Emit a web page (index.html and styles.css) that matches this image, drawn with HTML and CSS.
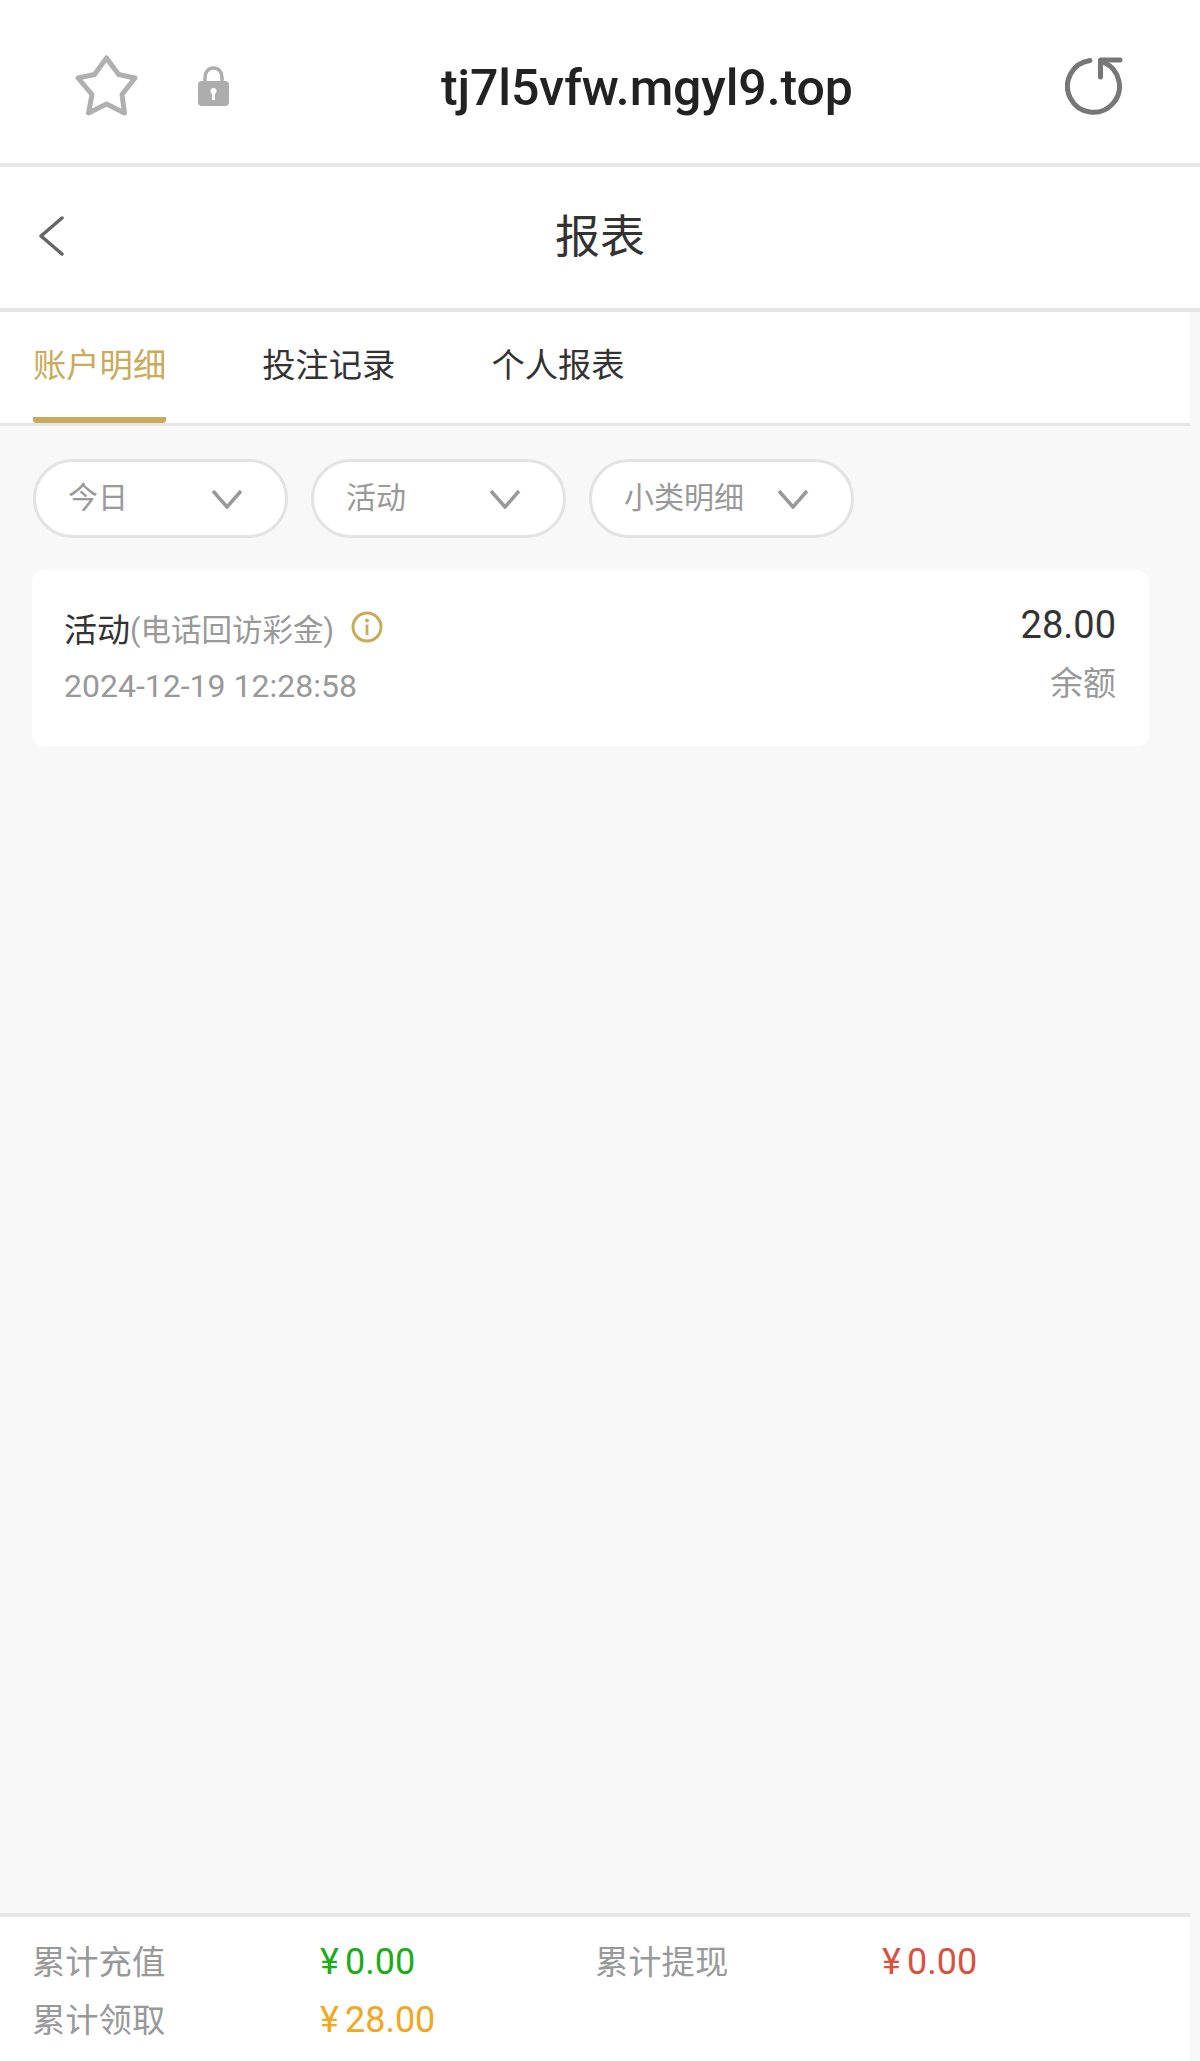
FILE: index.html
```html
<!DOCTYPE html>
<html lang="zh-CN">
<head>
<meta charset="utf-8">
<title>报表</title>
<link rel="stylesheet" href="styles.css">
</head>
<body>
<header class="addressbar">
  <svg class="star" viewBox="0 0 63 61" width="63" height="61"><path d="M31.5 3L43.6 19.5L60 23L47 39.5L49.5 58L31.5 49L13.5 58L17 39.5L3 23L19.5 19.5Z" fill="none" stroke="#b0b0b0" stroke-width="5" stroke-linejoin="round"/></svg>
  <svg class="lock" viewBox="0 0 31 40" width="31" height="40"><path d="M7 16V11.5C7 6 10.5 2 15.5 2S24 6 24 11.5V16" fill="none" stroke="#adadad" stroke-width="3.5"/><rect x="0" y="15" width="31" height="25" rx="4" fill="#adadad"/><circle cx="15.5" cy="25" r="3" fill="#fff"/><rect x="14" y="25" width="3" height="9" rx="1" fill="#fff"/></svg>
  <div class="url">tj7l5vfw.mgyl9.top</div>
  <svg class="reload" viewBox="0 0 60 58" width="60" height="58"><path d="M25 3.5A26 26 0 1 0 39 5.5" fill="none" stroke="#777" stroke-width="5" stroke-linecap="round"/><path d="M35.5 20V3H55" fill="none" stroke="#777" stroke-width="5" stroke-linecap="round" stroke-linejoin="round"/></svg>
</header>
<header class="titlebar">
  <svg class="back" viewBox="0 0 26 40" width="26" height="40"><path d="M24 2L3 20L24 38" fill="none" stroke="#666" stroke-width="3.5" stroke-linecap="round" stroke-linejoin="round"/></svg>
  <h1 class="title">报表</h1>
  <span></span>
</header>
<div class="app">
  <nav class="tabs">
    <a class="tab tab-active">账户明细</a>
    <a class="tab">投注记录</a>
    <a class="tab">个人报表</a>
  </nav>
  <main class="main">
    <div class="filters">
      <div class="pill"><span class="pill-text">今日</span><svg class="chev" viewBox="0 0 32 20" width="32" height="20"><path d="M2 2L16 18L30 2" fill="none" stroke="#999" stroke-width="3.5"/></svg></div>
      <div class="pill"><span class="pill-text">活动</span><svg class="chev" viewBox="0 0 32 20" width="32" height="20"><path d="M2 2L16 18L30 2" fill="none" stroke="#999" stroke-width="3.5"/></svg></div>
      <div class="pill"><span class="pill-text">小类明细</span><svg class="chev" viewBox="0 0 32 20" width="32" height="20"><path d="M2 2L16 18L30 2" fill="none" stroke="#999" stroke-width="3.5"/></svg></div>
    </div>
    <article class="card">
      <div class="card-left">
        <div class="card-title">活动<span class="card-sub">(电话回访彩金)</span>
          <svg class="info" viewBox="0 0 32 32" width="32" height="32"><circle cx="16" cy="16" r="14" fill="none" stroke="#c9ab5b" stroke-width="3"/><circle cx="16" cy="9.5" r="1.9" fill="#c9ab5b"/><rect x="14.6" y="13.5" width="2.8" height="10.5" fill="#c9ab5b"/></svg>
        </div>
        <div class="card-date">2024-12-19 12:28:58</div>
      </div>
      <div class="card-right">
        <div class="amount">28.00</div>
        <div class="balance">余额</div>
      </div>
    </article>
  </main>
  <footer class="summary">
    <span class="label">累计充值</span><span class="value green">¥<b>0.00</b></span>
    <span class="label">累计提现</span><span class="value red">¥<b>0.00</b></span>
    <span class="label">累计领取</span><span class="value orange">¥<b>28.00</b></span>
  </footer>
</div>
</body>
</html>
```
FILE: styles.css
```css
* { box-sizing: border-box; }
html, body { margin: 0; padding: 0; }
body {
  width: 1200px;
  height: 2061px;
  display: flex;
  flex-direction: column;
  background: #f8f8f8;
  font-family: Roboto, "Noto Sans CJK SC", sans-serif;
  color: #333;
  overflow: hidden;
}
.addressbar {
  height: 167px;
  flex: none;
  display: flex;
  align-items: center;
  background: #fff;
  border-bottom: 4px solid #e6e6e6;
  padding-left: 75px;
}
.star { flex: none; margin-top: 8px; }
.lock { flex: none; margin-left: 60px; margin-top: 8px; }
.url {
  margin-left: 212px;
  width: 412px;
  font-size: 50px;
  font-weight: 500;
  letter-spacing: -0.1px;
  color: #222;
  white-space: nowrap;
  margin-top: 13px;
}
.reload { flex: none; margin-left: 212px; margin-top: 8px; }
.titlebar {
  height: 145px;
  flex: none;
  display: grid;
  grid-template-columns: 1fr auto 1fr;
  align-items: center;
  background: #fff;
  border-bottom: 4px solid #e6e6e6;
  padding: 0 38px;
}
.back { margin-top: -3px; }
.title {
  margin: 0;
  font-size: 45px;
  font-weight: 400;
  line-height: 60px;
  color: #333;
}
.app {
  width: 1190px;
  flex: 1;
  display: flex;
  flex-direction: column;
}
.tabs {
  height: 114px;
  flex: none;
  display: flex;
  gap: 96px;
  padding-left: 33px;
  background: #fff;
  border-bottom: 3px solid #e6e6e6;
}
.tab {
  font-size: 33.3px;
  line-height: 107px;
  height: 111px;
  color: #333;
  white-space: nowrap;
}
.tab-active {
  color: #c9ab5b;
  border-bottom: 6px solid #c9ab5b;
  border-radius: 0 0 3px 3px;
}
.main { flex: 1; }
.filters {
  display: flex;
  gap: 23px;
  padding: 33px 0 0 33px;
}
.pill {
  height: 79px;
  min-width: 255px;
  display: flex;
  align-items: center;
  justify-content: space-between;
  gap: 33px;
  padding: 0 42px 0 32px;
  background: #fff;
  border: 3px solid #e3e3e3;
  border-radius: 40px;
  font-size: 30px;
  color: #999;
}
.pill-text { margin-top: -8px; }
.card {
  margin: 32px 41px 0 32px;
  height: 176px;
  padding: 29px 33px 0 32px;
  display: flex;
  justify-content: space-between;
  background: #fff;
  border-radius: 12px;
}
.card-title {
  display: flex;
  align-items: center;
  height: 58px;
  font-size: 33px;
  color: #333;
}
.card-sub { font-size: 30.5px; color: #999; }
.info { margin-left: 17px; margin-top: -2px; }
.card-date {
  line-height: 58px;
  font-size: 32px;
  color: #999;
}
.card-right { text-align: right; margin-top: -3px; }
.amount { font-size: 38px; line-height: 58px; color: #333; }
.balance { font-size: 33px; line-height: 60px; color: #999; }
.summary {
  height: 148px;
  flex: none;
  display: grid;
  grid-template-columns: 288px 275px 287px 1fr;
  grid-auto-rows: 58px;
  align-items: center;
  padding: 16px 0 0 32px;
  background: #fff;
  border-top: 4px solid #e6e6e6;
}
.label { font-size: 33.3px; color: #999; white-space: nowrap; margin-top: -5px; }
.value { font-size: 36px; white-space: nowrap; }
.value b { font-weight: 400; margin-left: 6px; }
.green { color: #1aad19; }
.red { color: #d9503f; }
.orange { color: #f0a823; }
```
